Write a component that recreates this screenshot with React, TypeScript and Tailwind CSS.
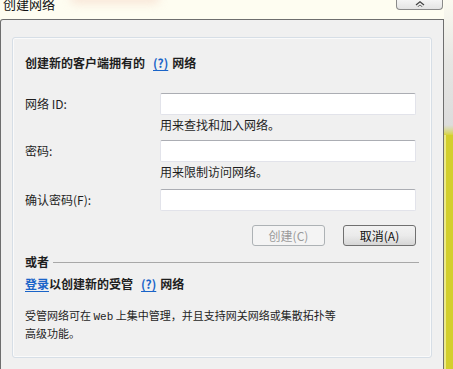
const cjk = "font-['Microsoft_YaHei','Noto_Sans_CJK_SC',sans-serif]";

function TextInput() {
  return (
    <div className="h-[22px] w-[256px] rounded-[2px] border border-[#e2e3ea] border-t-[#abadb3] bg-white" />
  );
}

function Row({ label }: { label: string }) {
  return (
    <div className="flex h-[22px] items-center">
      <span className="w-[135px] text-[12px] leading-[16px] text-[#1e1e1e]">{label}</span>
      <TextInput />
    </div>
  );
}

export default function App() {
  return (
    <div className={`flex h-[369px] w-[453px] overflow-hidden bg-[#fdfcef] ${cjk}`}>
      {/* dialog window */}
      <div className="flex w-[444px] flex-col">
        <div className="relative flex h-[19px] shrink-0 items-start justify-between bg-[#fefdf1]">
          <div className="absolute left-[70px] top-[-8px] h-[12px] w-[90px] rounded-full bg-[#f6d8c8] opacity-60 blur-[5px]" />
          <span className="relative ml-[3px] mt-[-4px] text-[13px] leading-[16px] text-[#111]">创建网络</span>
          <div className="mr-[1px] flex h-[10px] w-[47px] items-start justify-center rounded-b-[4px] border border-t-0 border-[#8a8a8a] bg-gradient-to-b from-[#f4f4f4] to-[#e4e4e4]">
            <svg width="10" height="6" viewBox="0 0 10 6" className="mt-[1px]">
              <path d="M1 4 L5 0.8 L9 4" fill="none" stroke="#444" strokeWidth="1.3" />
              <path d="M2.5 6 L5 4 L7.5 6" fill="none" stroke="#666" strokeWidth="1" />
            </svg>
          </div>
        </div>

        <div className="flex-1 rounded-tl-[3px] border-x border-t border-[#6e6e6e] bg-[#f0f0f0] px-[11px] pt-[17px]">
          <div className="h-[321px] rounded-[3px] border border-[#d6dee6] bg-[#f0f0f0] px-[12px] shadow-[inset_0_0_0_1px_#fafafa]">
            <div className="mt-[17px] flex h-[16px] items-center text-[12px] font-bold text-[#1e1e1e]">
              创建新的客户端拥有的
              <span className="ml-[8px] mr-[4px] text-[#1a64c8] underline underline-offset-2">(?)</span>
              网络
            </div>

            <div className="mt-[22px]">
              <Row label="网络 ID:" />
              <div className="ml-[135px] mt-[2px] h-[16px] text-[12px] leading-[16px] text-[#1e1e1e]">用来查找和加入网络。</div>
            </div>
            <div className="mt-[7px]">
              <Row label="密码:" />
              <div className="ml-[135px] mt-[2px] h-[16px] text-[12px] leading-[16px] text-[#1e1e1e]">用来限制访问网络。</div>
            </div>
            <div className="mt-[9px]">
              <Row label="确认密码(F):" />
            </div>

            <div className="mt-[14px] flex justify-end gap-[18px] pr-[3px]">
              <div className="flex h-[21px] w-[73px] items-center justify-center rounded-[3px] border border-[#adb2b5] bg-[#f4f4f4] text-[12px] text-[#9a9a9a]">
                创建(C)
              </div>
              <div className="flex h-[21px] w-[73px] items-center justify-center rounded-[3px] border border-[#707070] bg-gradient-to-b from-[#f2f2f2] via-[#ebebeb] to-[#d6d6d6] text-[12px] text-[#111]">
                取消(A)
              </div>
            </div>

            <div className="mt-[8px] flex h-[16px] items-center">
              <span className="text-[12px] font-bold text-[#1e1e1e]">或者</span>
              <div className="ml-[4px] h-px flex-1 bg-[#a8a8a8]" />
            </div>

            <div className="mt-[6px] flex h-[16px] items-center text-[12px] font-bold text-[#1e1e1e]">
              <span className="text-[#1a64c8] underline underline-offset-2">登录</span>
              以创建新的受管
              <span className="ml-[8px] mr-[4px] text-[#1a64c8] underline underline-offset-2">(?)</span>
              网络
            </div>

            <p className="mt-[15px] w-[320px] text-[11px] leading-[16px] text-[#1e1e1e]">
              受管网络可在 <span className="font-['Liberation_Mono',monospace]">Web</span> 上集中管理，并且支持网关网络或集散拓扑等高级功能。
            </p>
          </div>
        </div>
      </div>

      {/* desktop behind */}
      <div className="flex w-[9px] flex-col">
        <div className="h-[125px] bg-gradient-to-b from-[#fbfaf0] via-[#e6e6e3] to-[#dcdcdc]" />
        <div className="h-[10px] bg-gradient-to-b from-[#dcdcdc] to-[#d8d43a]" />
        <div className="flex-1 border-l-2 border-[#ece98a] bg-[#d3cf2c]" />
      </div>
    </div>
  );
}
